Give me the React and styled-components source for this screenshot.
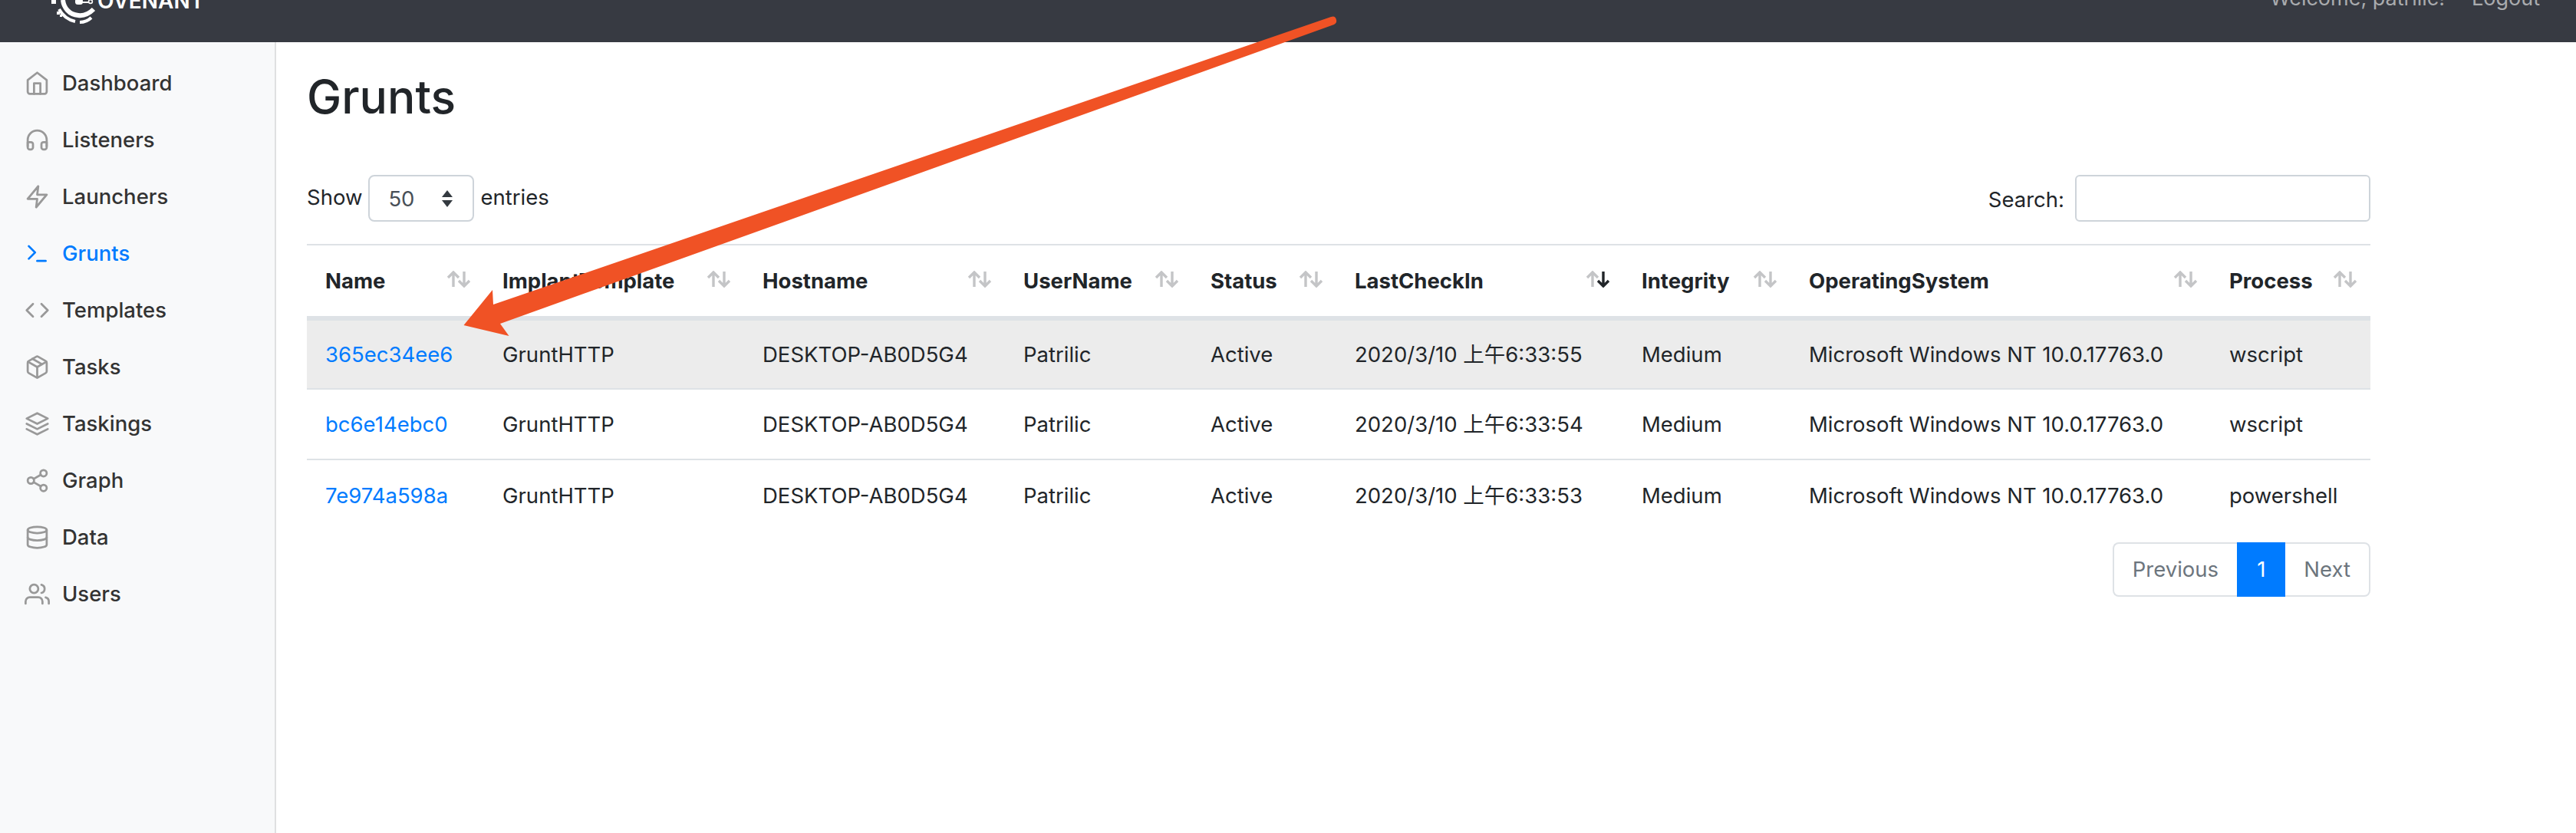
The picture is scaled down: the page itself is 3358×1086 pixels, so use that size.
import React from 'react';
import styled, { createGlobalStyle } from 'styled-components';
import { FiHome, FiHeadphones, FiZap, FiTerminal, FiCode, FiPackage, FiLayers, FiShare2, FiDatabase, FiUsers } from 'react-icons/fi';

const Global = createGlobalStyle`
    html, body { margin: 0; padding: 0; background: #fff; }
    body { font-family: Inter, "Noto Sans CJK SC", sans-serif; color: #212529; }
`

const navItems = [
    { label: 'Dashboard', Icon: FiHome },
    { label: 'Listeners', Icon: FiHeadphones },
    { label: 'Launchers', Icon: FiZap },
    { label: 'Grunts', Icon: FiTerminal, active: true },
    { label: 'Templates', Icon: FiCode },
    { label: 'Tasks', Icon: FiPackage },
    { label: 'Taskings', Icon: FiLayers },
    { label: 'Graph', Icon: FiShare2 },
    { label: 'Data', Icon: FiDatabase },
    { label: 'Users', Icon: FiUsers },
];

const columns = [
    { title: 'Name', width: 231 },
    { title: 'ImplantTemplate', width: 339 },
    { title: 'Hostname', width: 340 },
    { title: 'UserName', width: 244 },
    { title: 'Status', width: 188 },
    { title: 'LastCheckIn', width: 374, sorted: true },
    { title: 'Integrity', width: 218 },
    { title: 'OperatingSystem', width: 548 },
    { title: 'Process', width: 208 },
];

const rows = [
    ['365ec34ee6', '55', 'wscript'],
    ['bc6e14ebc0', '54', 'wscript'],
    ['7e974a598a', '53', 'powershell'],
];

function SortArrows({ sorted })
{
    return(
        <SortIcon width="32" height="22" viewBox="0 0 32 22" fill="none" strokeWidth="3.4">
            <path d="M9 21V2M2 9l7-7 7 7" stroke="#c4c5c7" />
            <path d="M23 1v19M16 13l7 7 7-7" stroke={sorted ? '#212529' : '#c4c5c7'} />
        </SortIcon>
    );
}

function App()
{
    return(
        <Page>
            <Global />
            <Navbar>
                <Brand>
                    <svg width="68" height="32" viewBox="0 0 68 32" fill="none" stroke="#fff">
                        {/* covenant mark: two arcs, a key and some loose pixels */}
                        <path d="M22 0 C23 10 30 19 42 20 C50 21 57 17 62 12" strokeWidth="6" />
                        <path d="M17 12 C22 21 29 26 38 28" strokeWidth="4" />
                        <path d="M44 29 C50 29 55 27 59 23" strokeWidth="4" />
                        <path d="M47 3 H55" strokeWidth="2" />
                        <circle cx="58" cy="2" r="2.4" strokeWidth="1.6" />
                        <rect x="38" y="-2" width="10" height="8" rx="3.5" fill="#fff" stroke="none" />
                        <rect x="7" y="0" width="6" height="5" fill="#fff" stroke="none" />
                        <rect x="14" y="15" width="4" height="4" fill="#fff" stroke="none" />
                        <rect x="18" y="19" width="3" height="3" fill="#fff" stroke="none" />
                    </svg>
                    <BrandName>OVENANT</BrandName>
                </Brand>
                <NavLinks>
                    <NavLink>Welcome, patrilic!</NavLink>
                    <NavLink>Logout</NavLink>
                </NavLinks>
            </Navbar>
            <Body>
                <Sidebar>
                    {navItems.map(({ label, Icon, active }) => (
                        <SideItem key={label} $active={active}>
                            <Icon size={33} />
                            {label}
                        </SideItem>
                    ))}
                </Sidebar>
                <Main>
                    <Title>Grunts</Title>
                    <Toolbar>
                        <ShowGroup>
                            <ToolText>Show</ToolText>
                            <SelectBox>
                                50
                                <Carets>
                                    <svg width="16" height="22" viewBox="0 0 16 22" fill="#343a40">
                                        <path d="M8 0 L15 9 H1 Z" />
                                        <path d="M8 22 L15 13 H1 Z" />
                                    </svg>
                                </Carets>
                            </SelectBox>
                            <ToolText>entries</ToolText>
                        </ShowGroup>
                        <SearchGroup>
                            <SearchLabel>Search:</SearchLabel>
                            <SearchBox />
                        </SearchGroup>
                    </Toolbar>
                    <Table>
                        <colgroup>
                            {columns.map((c) => <Col key={c.title} $w={c.width} />)}
                        </colgroup>
                        <thead>
                            <tr>
                                {columns.map((c) => (
                                    <Th key={c.title}>
                                        <ThInner>
                                            {c.title}
                                            <SortArrows sorted={c.sorted} />
                                        </ThInner>
                                    </Th>
                                ))}
                            </tr>
                        </thead>
                        <tbody>
                            {rows.map(([name, sec, proc], i) => (
                                <Row key={name} $hover={i === 0}>
                                    <Td><NameLink>{name}</NameLink></Td>
                                    <Td>GruntHTTP</Td>
                                    <Td>DESKTOP-AB0D5G4</Td>
                                    <Td>Patrilic</Td>
                                    <Td>Active</Td>
                                    <Td>2020/3/10 上午6:33:{sec}</Td>
                                    <Td>Medium</Td>
                                    <Td>Microsoft Windows NT 10.0.17763.0</Td>
                                    <Td>{proc}</Td>
                                </Row>
                            ))}
                        </tbody>
                    </Table>
                    <Pager>
                        <PageBtn>Previous</PageBtn>
                        <PageBtn $active>1</PageBtn>
                        <PageBtn>Next</PageBtn>
                    </Pager>
                </Main>
            </Body>
            <ArrowOverlay width="3358" height="1086" viewBox="0 0 3358 1086">
                <path d="M604.5 424 L642 378 L643 397 L1735 22 Q1741 20 1742 26 Q1743 30 1739 32 L652 422 L663.5 438 Z" fill="#f05225" />
            </ArrowOverlay>
        </Page>
    );
}

const Page = styled.div`
    position: relative;
    width: 3358px;
    height: 1086px;
    overflow: hidden;
`
const Navbar = styled.div`
    height: 55px;
    background: #373a42;
    display: flex;
    justify-content: space-between;
    overflow: hidden;
`
const Brand = styled.div`
    display: flex;
    align-items: flex-start;
    padding-left: 60px;
    height: 32px;
`
const BrandName = styled.div`
    color: #fff;
    font-size: 28px;
    font-weight: 600;
    line-height: 28px;
    margin-top: -13px;
    margin-left: -1px;
`
const NavLinks = styled.div`
    display: flex;
    gap: 35px;
    padding-right: 47px;
`
const NavLink = styled.div`
    color: #a9abae;
    font-size: 27px;
    line-height: 32px;
    margin-top: -18px;
`
const Body = styled.div`
    display: flex;
    height: 1031px;
`
const Sidebar = styled.div`
    width: 358px;
    flex-shrink: 0;
    background: #f8f9fa;
    border-right: 2px solid #dfe0e1;
    padding-top: 16px;
`
const SideItem = styled.div`
    height: 74px;
    display: flex;
    align-items: center;
    gap: 16px;
    padding-left: 32px;
    font-size: 27.5px;
    font-weight: 500;
    color: ${p => p.$active ? '#007bff' : '#333'};
    svg { color: ${p => p.$active ? '#007bff' : '#999'}; flex-shrink: 0; }
`
const Main = styled.div`
    flex: 1;
    padding: 0 268px 0 40px;
`
const Title = styled.div`
    font-size: 60.5px;
    font-weight: 500;
    line-height: 72px;
    margin-top: 35px;
    color: #212529;
`
const Toolbar = styled.div`
    display: flex;
    justify-content: space-between;
    margin-top: 66px;
    height: 90px;
`
const ShowGroup = styled.div`
    display: flex;
    align-items: flex-start;
    gap: 8px;
`
const ToolText = styled.span`
    font-size: 27.5px;
    line-height: 58px;
`
const SelectBox = styled.div`
    box-sizing: border-box;
    width: 138px;
    height: 61px;
    border: 2px solid #ced4da;
    border-radius: 8px;
    position: relative;
    padding-left: 24px;
    font-size: 27.5px;
    line-height: 59px;
    color: #495057;
`
const Carets = styled.span`
    position: absolute;
    right: 25px;
    top: 18px;
    line-height: 0;
`
const SearchGroup = styled.div`
    display: flex;
    align-items: flex-start;
    gap: 14px;
`
const SearchLabel = styled.span`
    font-size: 27.5px;
    line-height: 65px;
`
const SearchBox = styled.div`
    box-sizing: border-box;
    width: 385px;
    height: 61px;
    border: 2px solid #ced4da;
    border-radius: 6px;
`
const Table = styled.table`
    table-layout: fixed;
    width: 2690px;
    border-collapse: collapse;
    font-size: 27.5px;
`
const Col = styled.col`
    width: ${p => p.$w}px;
`
const Th = styled.th`
    height: 92px;
    padding: 0 17px 0 24px;
    border-top: 2px solid #dee2e6;
    border-bottom: 6px solid #dee2e6;
    text-align: left;
    font-weight: 700;
    white-space: nowrap;
`
const ThInner = styled.div`
    display: flex;
    justify-content: space-between;
    align-items: center;
`
const SortIcon = styled.svg`
    flex-shrink: 0;
    margin-top: -4px;
`
const Row = styled.tr`
    height: 92px;
    background: ${p => p.$hover ? '#ececec' : '#fff'};
    border-bottom: 2px solid #dee2e6;
    &:last-child { border-bottom: 0; }
`
const Td = styled.td`
    padding: 0 0 0 24px;
    line-height: 32px;
    white-space: nowrap;
    overflow: hidden;
`
const NameLink = styled.span`
    color: #007bff;
`
const Pager = styled.div`
    display: flex;
    justify-content: flex-end;
    margin-top: 16px;
    width: 2690px;
`
const PageBtn = styled.div`
    box-sizing: border-box;
    height: 71px;
    padding: 0 24px;
    font-size: 27.5px;
    line-height: 67px;
    border: 2px solid ${p => p.$active ? '#007bff' : '#dee2e6'};
    background: ${p => p.$active ? '#007bff' : '#fff'};
    color: ${p => p.$active ? '#fff' : '#6c757d'};
    &:first-child { border-radius: 8px 0 0 8px; border-right: 0; }
    &:last-child { border-radius: 0 8px 8px 0; border-left: 0; }
`
const ArrowOverlay = styled.svg`
    position: absolute;
    left: 0;
    top: 0;
    pointer-events: none;
`

export default App;
